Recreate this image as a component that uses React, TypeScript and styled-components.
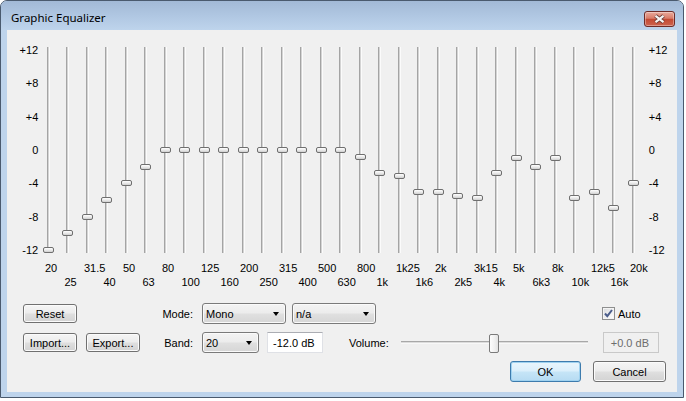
import styled, { createGlobalStyle } from 'styled-components';

const GlobalStyle = createGlobalStyle`
    html, body {
        margin: 0;
        padding: 0;
        background: #ffffff;
    }
    body {
        font-family: "Liberation Sans", Arial, sans-serif;
        font-size: 11px;
        color: #000000;
    }
    * {
        box-sizing: border-box;
    }
`;

interface Band {
    name: string;
    gain: number;
}

const bands: Band[] = [
    { name: '20', gain: -12 },
    { name: '25', gain: -10 },
    { name: '31.5', gain: -8 },
    { name: '40', gain: -6 },
    { name: '50', gain: -4 },
    { name: '63', gain: -2 },
    { name: '80', gain: 0 },
    { name: '100', gain: 0 },
    { name: '125', gain: 0 },
    { name: '160', gain: 0 },
    { name: '200', gain: 0 },
    { name: '250', gain: 0 },
    { name: '315', gain: 0 },
    { name: '400', gain: 0 },
    { name: '500', gain: 0 },
    { name: '630', gain: 0 },
    { name: '800', gain: -0.8 },
    { name: '1k', gain: -2.8 },
    { name: '1k25', gain: -3.1 },
    { name: '1k6', gain: -5 },
    { name: '2k', gain: -5 },
    { name: '2k5', gain: -5.5 },
    { name: '3k15', gain: -5.8 },
    { name: '4k', gain: -2.8 },
    { name: '5k', gain: -0.9 },
    { name: '6k3', gain: -2 },
    { name: '8k', gain: -0.9 },
    { name: '10k', gain: -5.8 },
    { name: '12k5', gain: -5 },
    { name: '16k', gain: -6.9 },
    { name: '20k', gain: -3.9 },
];

const scale = ['+12', '+8', '+4', '0', '-4', '-8', '-12'];

const RANGE = 12;
const TRACK_H = 206;
const THUMB_H = 6;

// top offset of a band thumb inside its track
const thumbTop = (gain: number) => ((RANGE - gain) / (2 * RANGE)) * (TRACK_H - THUMB_H);

const App = () => {
    const volume = 0;
    const volumePct = ((volume + 24) / 48) * 100;

    return (
        <>
            <GlobalStyle />
            <Window>
                <TitleBar>
                    <Title>Graphic Equalizer</Title>
                    <CloseButton>
                        <svg width='13' height='10' viewBox='0 0 13 10'>
                            <path d='M2.5 1.8 L10.5 8.2 M10.5 1.8 L2.5 8.2' stroke='#6b3b36' strokeWidth='4' />
                            <path d='M2.5 1.8 L10.5 8.2 M10.5 1.8 L2.5 8.2' stroke='#f4f4f4' strokeWidth='2.2' />
                        </svg>
                    </CloseButton>
                </TitleBar>
                <Frame>
                    <Client>
                        <EqSection>
                            <Scale $side='left'>
                                {scale.map((s) => (
                                    <ScaleLabel key={s}>{s}</ScaleLabel>
                                ))}
                            </Scale>
                            <Bands>
                                {bands.map((band, i) => (
                                    <BandColumn key={band.name}>
                                        <Track>
                                            <Thumb style={{ top: thumbTop(band.gain) }} />
                                        </Track>
                                        <BandLabel $low={i % 2 === 1}>{band.name}</BandLabel>
                                    </BandColumn>
                                ))}
                            </Bands>
                            <Scale $side='right'>
                                {scale.map((s) => (
                                    <ScaleLabel key={s}>{s}</ScaleLabel>
                                ))}
                            </Scale>
                        </EqSection>

                        <Controls>
                            <Row>
                                <ButtonGroup>
                                    <PushButton $w={54}>Reset</PushButton>
                                </ButtonGroup>
                                <FieldLabel>Mode:</FieldLabel>
                                <Combo $w={84} $ml={9}>
                                    Mono
                                    <Arrow />
                                </Combo>
                                <Combo $w={84} $ml={6}>
                                    n/a
                                    <Arrow />
                                </Combo>
                                <CheckWrap>
                                    <CheckBox>
                                        <svg width='11' height='11' viewBox='0 0 11 11'>
                                            <path
                                                d='M2 5.5 L4.3 8.2 L9 2'
                                                fill='none'
                                                stroke='#4b5d8b'
                                                strokeWidth='2'
                                            />
                                        </svg>
                                    </CheckBox>
                                    Auto
                                </CheckWrap>
                            </Row>
                            <Row>
                                <ButtonGroup>
                                    <PushButton $w={54}>Import...</PushButton>
                                    <PushButton $w={54}>Export...</PushButton>
                                </ButtonGroup>
                                <FieldLabel>Band:</FieldLabel>
                                <Combo $w={57} $ml={9}>
                                    20
                                    <Arrow />
                                </Combo>
                                <TextBox $ml={8}>-12.0 dB</TextBox>
                                <VolumeLabel>Volume:</VolumeLabel>
                                <Slider>
                                    <SliderTrack />
                                    <SliderThumb style={{ left: `calc(${volumePct}% - 5px)` }} />
                                </Slider>
                                <TextBox $ml={15} $disabled>
                                    +0.0 dB
                                </TextBox>
                            </Row>
                            <DialogRow>
                                <PushButton $w={71} $h={21} $default>
                                    OK
                                </PushButton>
                                <PushButton $w={73} $h={21}>
                                    Cancel
                                </PushButton>
                            </DialogRow>
                        </Controls>
                    </Client>
                </Frame>
            </Window>
        </>
    );
};

const Window = styled.div`
    width: 684px;
    height: 398px;
    border: 1px solid #4a5a6e;
    border-radius: 7px 7px 0 0;
    background: #bed4ec;
    display: flex;
    flex-direction: column;
    overflow: hidden;
`;

const TitleBar = styled.div`
    flex: none;
    height: 29px;
    display: flex;
    justify-content: space-between;
    align-items: flex-start;
    padding: 0 8px 0 10px;
    background: linear-gradient(180deg, #a2b9d6 0%, #b1c8e3 55%, #bed4ec 100%);
`;

const Title = styled.div`
    margin-top: 9px;
    font-family: "Noto Sans", "Open Sans", sans-serif;
    font-size: 11.5px;
    line-height: 16px;
    color: #000000;
`;

const CloseButton = styled.div`
    margin-top: 10px;
    width: 31px;
    height: 16px;
    display: flex;
    align-items: center;
    justify-content: center;
    border: 1px solid #6e2b27;
    border-radius: 3px;
    background: linear-gradient(180deg, #e9aa9c 0%, #d97c69 45%, #c44a33 52%, #cd6450 100%);
    box-shadow: inset 0 0 0 1px rgba(255, 255, 255, 0.35);
`;

const Frame = styled.div`
    flex: 1;
    display: flex;
    padding: 0 6px 5px 6px;
`;

const Client = styled.div`
    flex: 1;
    display: flex;
    flex-direction: column;
    background: #f0f0f0;
`;

const EqSection = styled.div`
    display: flex;
    align-items: flex-start;
    padding-top: 13px;
`;

const Scale = styled.div<{ $side: 'left' | 'right' }>`
    display: flex;
    flex-direction: column;
    justify-content: space-between;
    height: 214px;
    width: ${(p) => (p.$side === 'left' ? '31.25px' : 'auto')};
    margin-left: ${(p) => (p.$side === 'right' ? '6px' : '0')};
    text-align: ${(p) => (p.$side === 'left' ? 'right' : 'left')};
`;

const ScaleLabel = styled.span`
    line-height: 14px;
`;

const Bands = styled.div`
    display: grid;
    grid-template-columns: repeat(31, 19.5px);
`;

const BandColumn = styled.div`
    display: flex;
    flex-direction: column;
    padding-top: 4px;
`;

const Track = styled.div`
    position: relative;
    align-self: center;
    width: 3px;
    height: ${TRACK_H}px;
    background: linear-gradient(90deg, #a4a4a4 0 1px, #d4d4d4 1px 2px, #fbfbfb 2px 3px);
`;

const Thumb = styled.div`
    position: absolute;
    left: -4px;
    width: 11px;
    height: ${THUMB_H}px;
    border: 1px solid #6f6f6f;
    border-radius: 2px;
    background: linear-gradient(180deg, #ffffff 0%, #e6e6e6 60%, #cfcfcf 100%);
`;

const BandLabel = styled.div<{ $low: boolean }>`
    margin-top: ${(p) => (p.$low ? 22 : 8)}px;
    padding-left: 6.75px;
    line-height: 14px;
    white-space: nowrap;
`;

const Controls = styled.div`
    display: flex;
    flex-direction: column;
    gap: 8px;
    margin-top: 14px;
    padding-left: 16px;
`;

const Row = styled.div`
    display: flex;
    align-items: center;
    height: 21px;
`;

const DialogRow = styled.div`
    display: flex;
    justify-content: flex-end;
    gap: 12px;
    padding-right: 11px;
`;

const ButtonGroup = styled.div`
    display: flex;
    gap: 9px;
    width: 117px;
`;

const PushButton = styled.div<{ $w: number; $h?: number; $default?: boolean }>`
    width: ${(p) => p.$w}px;
    height: ${(p) => p.$h ?? 19}px;
    display: flex;
    align-items: center;
    justify-content: center;
    border: 1px solid ${(p) => (p.$default ? '#3d7bad' : '#707070')};
    border-radius: 3px;
    background: ${(p) =>
        p.$default
            ? 'linear-gradient(180deg, #e9f5fc 0%, #dbeffb 48%, #c6e5f7 52%, #b6dbf2 100%)'
            : 'linear-gradient(180deg, #f5f5f5 0%, #ececec 48%, #dfdfdf 52%, #d3d3d3 100%)'};
    box-shadow: inset 0 0 0 1px ${(p) => (p.$default ? '#9fd2f0' : '#fbfbfb')};
    white-space: nowrap;
`;

const FieldLabel = styled.div`
    width: 53px;
    text-align: right;
`;

const Combo = styled.div<{ $w: number; $ml: number }>`
    position: relative;
    width: ${(p) => p.$w}px;
    height: 21px;
    margin-left: ${(p) => p.$ml}px;
    display: flex;
    align-items: center;
    padding-left: 3px;
    border: 1px solid #7a7a7a;
    border-radius: 3px;
    background: linear-gradient(180deg, #f3f3f3 0%, #ececec 48%, #e0e0e0 52%, #d6d6d6 100%);
    box-shadow: inset 0 0 0 1px #fafafa;
`;

const Arrow = styled.span`
    position: absolute;
    right: 6px;
    top: 8px;
    width: 0;
    height: 0;
    border-left: 3.5px solid transparent;
    border-right: 3.5px solid transparent;
    border-top: 4px solid #000000;
`;

const TextBox = styled.div<{ $ml: number; $disabled?: boolean }>`
    width: 56px;
    height: 21px;
    margin-left: ${(p) => p.$ml}px;
    display: flex;
    align-items: center;
    padding-left: ${(p) => (p.$disabled ? 7 : 5)}px;
    background: ${(p) => (p.$disabled ? '#f0f0f0' : '#ffffff')};
    color: ${(p) => (p.$disabled ? '#6d6d6d' : '#000000')};
    border: 1px solid ${(p) => (p.$disabled ? '#c9c9c9' : '#dfe1e6')};
    border-top-color: ${(p) => (p.$disabled ? '#c9c9c9' : '#abadb3')};
`;

const VolumeLabel = styled.div`
    margin-left: 26px;
`;

const Slider = styled.div`
    position: relative;
    width: 187px;
    height: 21px;
    margin-left: 12px;
    display: flex;
    align-items: center;
`;

const SliderTrack = styled.div`
    flex: 1;
    height: 3px;
    border-top: 1px solid #a8a8a8;
    border-bottom: 1px solid #f8f8f8;
    background: #dcdcdc;
`;

const SliderThumb = styled.div`
    position: absolute;
    top: 2px;
    width: 10px;
    height: 19px;
    border: 1px solid #7a7a7a;
    border-radius: 2px;
    background: linear-gradient(90deg, #fdfdfd 0%, #f0f0f0 60%, #e2e2e2 100%);
`;

const CheckWrap = styled.div`
    display: flex;
    align-items: center;
    gap: 3px;
    margin-left: 226px;
`;

const CheckBox = styled.div`
    width: 13px;
    height: 13px;
    display: flex;
    align-items: center;
    justify-content: center;
    border: 1px solid #8e8f8f;
    background: linear-gradient(135deg, #d7d9dc 0%, #f2f2f2 60%, #ffffff 100%);
    box-shadow: inset 0 0 0 1px #f4f4f4;
`;

export default App;
